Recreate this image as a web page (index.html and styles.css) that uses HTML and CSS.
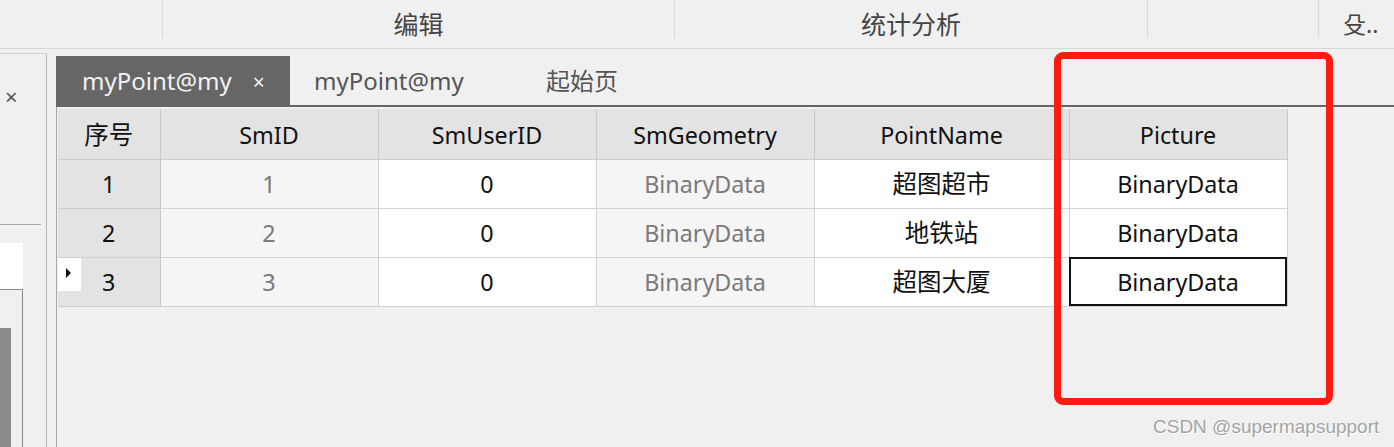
FILE: index.html
```html
<!DOCTYPE html>
<html lang="zh-CN">
<head>
<meta charset="utf-8">
<title>mypoint</title>
<link rel="stylesheet" href="styles.css">
</head>
<body>
<div class="app">
  <div class="ribbon">
    <div class="group g0"></div>
    <div class="group g1">编辑</div>
    <div class="group g2">统计分析</div>
    <div class="group g3"></div>
    <div class="group g4">殳..</div>
  </div>
  <div class="main">
    <div class="side">
      <div class="side-head"><span class="side-close">×</span></div>
      <div class="side-body">
        <div class="side-white"></div>
        <div class="side-box"><div class="side-bar"></div></div>
      </div>
    </div>
    <div class="doc">
      <div class="tabs">
        <div class="tab active">myPoint@my<span class="tab-close">×</span></div>
        <div class="tab">myPoint@my</div>
        <div class="tab">起始页</div>
      </div>
      <div class="grid-area">
        <table class="grid">
          <colgroup>
            <col class="c-rh"><col class="c-n"><col class="c-n"><col class="c-n"><col class="c-w"><col class="c-n">
          </colgroup>
          <thead>
            <tr>
              <th><span class="zh">序号</span></th><th>SmID</th><th>SmUserID</th><th>SmGeometry</th><th>PointName</th><th>Picture</th>
            </tr>
          </thead>
          <tbody>
            <tr>
              <td class="rh">1</td><td class="ro">1</td><td>0</td><td class="ro">BinaryData</td><td><span class="zh">超图超市</span></td><td>BinaryData</td>
            </tr>
            <tr>
              <td class="rh">2</td><td class="ro">2</td><td>0</td><td class="ro">BinaryData</td><td><span class="zh">地铁站</span></td><td>BinaryData</td>
            </tr>
            <tr>
              <td class="rh current"><span class="marker"><span class="tri"></span></span>3</td><td class="ro">3</td><td>0</td><td class="ro">BinaryData</td><td><span class="zh">超图大厦</span></td><td class="sel">BinaryData</td>
            </tr>
          </tbody>
        </table>
      </div>
    </div>
  </div>
  <div class="highlight"></div>
  <div class="watermark">CSDN @supermapsupport</div>
</div>
</body>
</html>
```
FILE: styles.css
```css
* { box-sizing: border-box; }
html, body {
  margin: 0;
  padding: 0;
  background: #f0f0f0;
}
body {
  font-family: "Noto Sans", "Noto Sans CJK SC", sans-serif;
  color: #111;
}
.app {
  position: relative;
  width: 1394px;
  height: 447px;
  overflow: hidden;
  background: #f0f0f0;
}
.ribbon {
  display: flex;
  height: 49px;
  border-bottom: 1px solid #d6d6d6;
}
.group {
  height: 38px;
  padding-top: 10px;
  text-align: center;
  font-size: 25px;
  line-height: 28px;
  color: #444;
  border-left: 1px solid #d8d8d8;
  white-space: nowrap;
}
.g0 { width: 162px; border-left: none; }
.g1 { width: 512px; }
.g2 { width: 473px; }
.g3 { width: 171px; }
.g4 { flex: 1; text-align: left; padding-left: 24px; font-size: 23px; }

.main {
  display: flex;
  height: 398px;
  padding-top: 4px;
}
.side {
  width: 47px;
  flex-shrink: 0;
  border-top: 1px solid #d4d4d4;
  border-right: 1px solid #b8b8b8;
  display: flex;
  flex-direction: column;
  overflow: hidden;
}
.side-head {
  flex-shrink: 0;
  height: 171px;
  border-bottom: 1px solid #a8a8a8;
  margin-right: 5px;
  padding-top: 28px;
}
.side-close {
  display: block;
  padding-left: 5px;
  font-size: 22px;
  line-height: 28px;
  color: #555;
}
.side-body {
  flex: 1;
  padding-top: 18px;
  overflow: hidden;
}
.side-white {
  width: 23px;
  height: 46px;
  background: #fff;
}
.side-box {
  width: 23px;
  height: 200px;
  border-top: 1px solid #888;
  border-right: 1px solid #888;
  padding-top: 38px;
}
.side-bar {
  width: 11px;
  height: 200px;
  background: #8a8a8a;
}

.doc {
  flex: 1;
  margin-left: 9px;
  display: flex;
  flex-direction: column;
}
.tabs {
  display: flex;
  flex-shrink: 0;
  height: 54px;
  padding-top: 3px;
  border-bottom: 2px solid #666;
}
.tab {
  height: 49px;
  font-size: 24px;
  line-height: 49px;
  color: #555;
  white-space: nowrap;
  padding: 0 0 0 24px;
}
.tab:nth-child(2) { width: 232px; }
.tab:nth-child(3) { width: 120px; padding-left: 24px; }
.tab.active {
  width: 234px;
  background: #666;
  color: #f2f2f2;
  padding-left: 26px;
}
.tab-close {
  margin-left: 21px;
  font-size: 21px;
}

.grid-area {
  flex: 1;
  border-left: 1px solid #a8a8a8;
  padding: 2px 0 0 1px;
}
.grid {
  border-collapse: collapse;
  table-layout: fixed;
  width: 1229px;
  font-size: 23.3px;
}
.c-rh { width: 102px; }
.c-n { width: 218px; }
.c-w { width: 255px; }
.grid th, .grid td {
  height: 49px;
  padding: 0;
  text-align: center;
  vertical-align: middle;
  font-weight: normal;
  border-right: 1px solid #d2d2d2;
  border-bottom: 1px solid #d2d2d2;
  white-space: nowrap;
  background: #fff;
  color: #111;
  line-height: 30px;
}
.grid th {
  height: 50px;
  padding-top: 2px;
}
.grid .zh {
  font-size: 24.5px;
}
.grid th {
  background: #e3e3e3;
  border-right-color: #c8c8c8;
  border-bottom-color: #cfcfcf;
}
.grid td.rh {
  background: #e3e3e3;
  border-right-color: #c8c8c8;
  border-bottom-color: #cfcfcf;
  position: relative;
}
.grid td.ro {
  background: #f5f5f5;
  color: #7a7a7a;
}
.grid td.sel {
  outline: 2px solid #111;
  outline-offset: -2px;
}
.marker {
  position: absolute;
  left: 0;
  top: 0;
  width: 23px;
  height: 33px;
  background: #fff;
}
.tri {
  position: absolute;
  left: 8px;
  top: 10px;
  width: 0;
  height: 0;
  border-top: 5px solid transparent;
  border-bottom: 5px solid transparent;
  border-left: 5px solid #111;
}

.highlight {
  position: absolute;
  left: 1054px;
  top: 52px;
  width: 279px;
  height: 353px;
  border: 7px solid #ff1a12;
  border-radius: 9px;
}
.watermark {
  position: absolute;
  left: 1153px;
  top: 415px;
  font-family: "Liberation Sans", Arial, sans-serif;
  font-size: 19px;
  line-height: 24px;
  color: #a4a4a4;
  text-shadow: 1px 1px 0 #fff;
  white-space: nowrap;
}
```
